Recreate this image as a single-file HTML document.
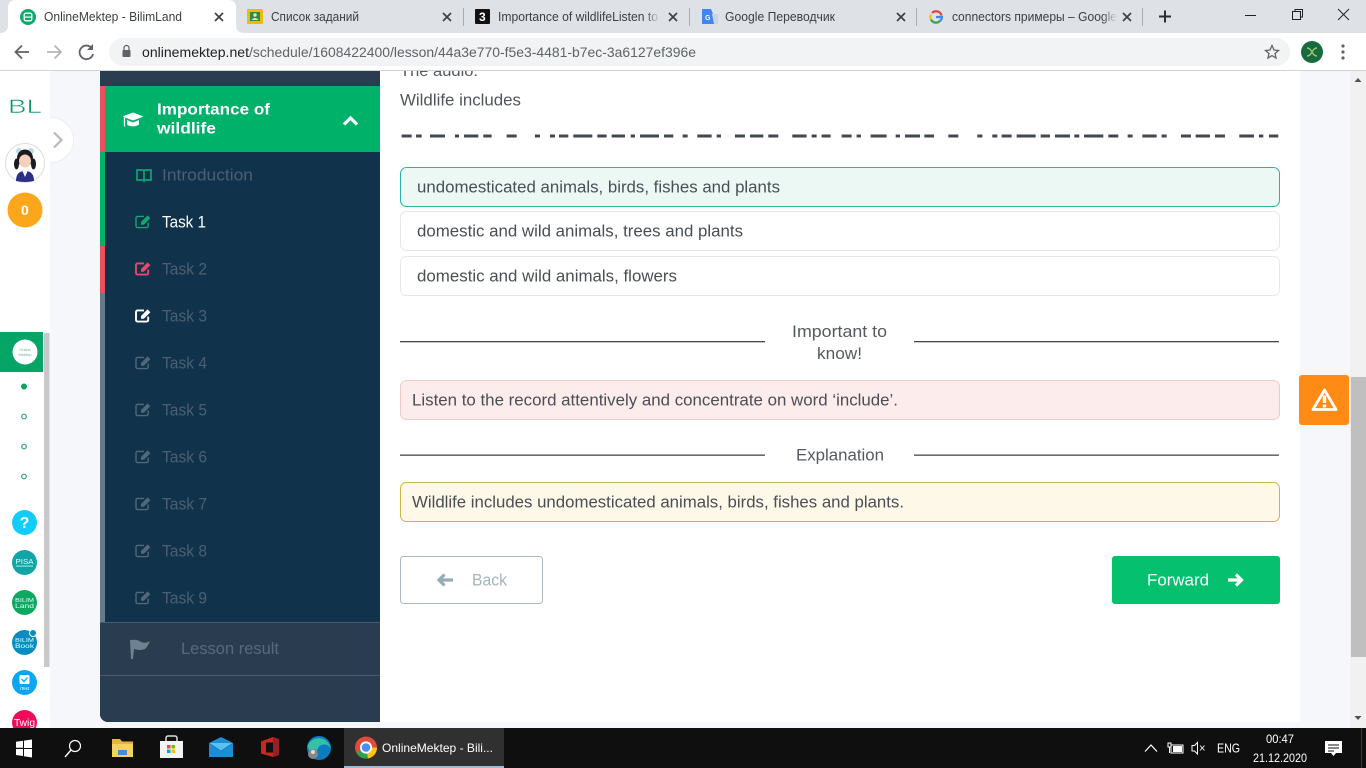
<!DOCTYPE html>
<html lang="en"><head><meta charset="utf-8"><title>OnlineMektep - BilimLand</title>
<style>
html,body{margin:0;padding:0;width:1366px;height:768px;overflow:hidden;background:#fff}
svg{display:block;position:absolute;left:0;top:0}
text{font-family:"Liberation Sans","Noto Sans CJK SC",sans-serif}
</style></head><body>
<svg width="1366" height="768" viewBox="0 0 1366 768" xmlns="http://www.w3.org/2000/svg">
<defs>
<symbol id="edit" viewBox="0 0 17 15" overflow="visible">
<path d="M9 2.4H2.6A1.6 1.6 0 0 0 1 4v8a1.6 1.6 0 0 0 1.6 1.6h9A1.6 1.6 0 0 0 13.2 12V8.6" fill="none" stroke="currentColor" stroke-width="1.4"/>
<path d="M6 8 12.6 1.4 15.4 4.2 8.8 10.8H6z" fill="currentColor"/>
</symbol>
<symbol id="editb" viewBox="0 0 17 15" overflow="visible">
<path d="M9 2.4H2.6A1.6 1.6 0 0 0 1 4v8a1.6 1.6 0 0 0 1.6 1.6h9A1.6 1.6 0 0 0 13.2 12V8.6" fill="none" stroke="currentColor" stroke-width="1.9"/>
<path d="M6 8 12.6 1.4 15.4 4.2 8.8 10.8H6z" fill="currentColor"/>
</symbol>
<linearGradient id="f1" x1="0" x2="1"><stop offset="0" stop-color="#dee1e6" stop-opacity="0"/><stop offset="1" stop-color="#dee1e6"/></linearGradient>
</defs>

<!-- page background -->
<rect width="1366" height="768" fill="#f5f7fa"/>

<!-- rail base and toggle -->
<circle cx="51" cy="140" r="22.5" fill="#fff" stroke="#eceef1"/>
<rect x="0" y="71" width="50" height="660" fill="#fff"/>
<rect x="44" y="333" width="5.500" height="334" fill="#c8c8c8"/>
<path d="M54 132.500 61.500 140 54 147.500" fill="none" stroke="#b5babd" stroke-width="2.200"/>

<!-- content -->
<rect x="380" y="71" width="920" height="651" fill="#fff"/>
<text x="400" y="76" font-size="16" fill="#555a60" textLength="78" lengthAdjust="spacingAndGlyphs">The audio:</text>
<rect x="380" y="0" width="920" height="71" fill="#fff"/>
<text x="400" y="105.500" font-size="16.5" fill="#51565c" textLength="121" lengthAdjust="spacingAndGlyphs">Wildlife includes</text>

<!-- dashes -->
<g fill="#43484e">
<g transform="translate(390 134.5) scale(.3333 1)">
<rect x="35" width="30" height="3"/><rect x="78" width="17" height="3"/><rect x="120" width="45" height="3"/><rect x="195" width="12" height="3"/><rect x="222" width="43" height="3"/><rect x="280" width="25" height="3"/><rect x="350" width="30" height="3"/><rect x="435" width="15" height="3"/><rect x="480" width="15" height="3"/><rect x="507" width="28" height="3"/><rect x="550" width="57" height="3"/><rect x="622" width="28" height="3"/><rect x="665" width="40" height="3"/><rect x="722" width="13" height="3"/><rect x="750" width="57" height="3"/><rect x="822" width="28" height="3"/><rect x="878" width="15" height="3"/><rect x="922" width="43" height="3"/><rect x="980" width="13" height="3"/><rect x="1035" width="30" height="3"/><rect x="1080" width="40" height="3"/><rect x="1135" width="30" height="3"/><rect x="1207" width="43" height="3"/><rect x="1265" width="15" height="3"/><rect x="1295" width="27" height="3"/><rect x="1355" width="30" height="3"/><rect x="1400" width="13" height="3"/><rect x="1442" width="48" height="3"/>
</g>
<g transform="translate(880 134.5) scale(.3333 1)">
<rect x="0" width="17" height="3"/><rect x="47" width="13" height="3"/><rect x="75" width="45" height="3"/><rect x="133" width="29" height="3"/><rect x="205" width="30" height="3"/><rect x="292" width="15" height="3"/><rect x="337" width="15" height="3"/><rect x="365" width="30" height="3"/><rect x="410" width="57" height="3"/><rect x="482" width="28" height="3"/><rect x="525" width="45" height="3"/><rect x="583" width="15" height="3"/><rect x="612" width="58" height="3"/><rect x="685" width="30" height="3"/><rect x="743" width="15" height="3"/><rect x="787" width="43" height="3"/><rect x="845" width="15" height="3"/><rect x="903" width="30" height="3"/><rect x="947" width="43" height="3"/><rect x="1005" width="30" height="3"/><rect x="1078" width="44" height="3"/><rect x="1137" width="13" height="3"/><rect x="1167" width="28" height="3"/>
</g>
</g>

<!-- options -->
<rect x="400.5" y="167.5" width="879" height="39" rx="6" fill="#ebf8f4" stroke="#2fb39c"/>
<text x="417" y="192.500" font-size="16.5" fill="#4a4f55" textLength="363" lengthAdjust="spacingAndGlyphs">undomesticated animals, birds, fishes and plants</text>
<rect x="400.5" y="211.5" width="879" height="39" rx="6" fill="#fff" stroke="#e5e7ea"/>
<text x="417" y="236.500" font-size="16.5" fill="#4a4f55" textLength="326" lengthAdjust="spacingAndGlyphs">domestic and wild animals, trees and plants</text>
<rect x="400.5" y="256.5" width="879" height="39" rx="6" fill="#fff" stroke="#e5e7ea"/>
<text x="417" y="281.500" font-size="16.5" fill="#4a4f55" textLength="260" lengthAdjust="spacingAndGlyphs">domestic and wild animals, flowers</text>

<rect x="400" y="341" width="365" height="1.3" fill="#44484d"/>
<rect x="914" y="341" width="365" height="1.3" fill="#44484d"/>
<text x="792" y="337" font-size="16.5" fill="#555a60" textLength="95" lengthAdjust="spacingAndGlyphs">Important to</text>
<text x="817" y="359" font-size="16.5" fill="#555a60" textLength="45" lengthAdjust="spacingAndGlyphs">know!</text>

<rect x="400.5" y="380.5" width="879" height="39" rx="6" fill="#fcecec" stroke="#eccaca"/>
<text x="412" y="405.500" font-size="16.5" fill="#4a4f55" textLength="486" lengthAdjust="spacingAndGlyphs">Listen to the record attentively and concentrate on word ‘include’.</text>

<rect x="400" y="454.5" width="365" height="1.3" fill="#44484d"/>
<rect x="914" y="454.5" width="365" height="1.3" fill="#44484d"/>
<text x="796" y="460.500" font-size="16.5" fill="#555a60" textLength="88" lengthAdjust="spacingAndGlyphs">Explanation</text>

<rect x="400.5" y="482.5" width="879" height="39" rx="6" fill="#fdf8e7" stroke="#cdb54e"/>
<text x="412" y="507.500" font-size="16.5" fill="#4a4f55" textLength="492" lengthAdjust="spacingAndGlyphs">Wildlife includes undomesticated animals, birds, fishes and plants.</text>

<!-- buttons -->
<rect x="400.5" y="556.5" width="142" height="47" rx="3" fill="#fff" stroke="#a9b9c0"/>
<path d="M444.500 574.500 439 580 444.500 585.500M440 580H453" fill="none" stroke="#93adb8" stroke-width="3.200"/>
<text x="472" y="585.500" font-size="17" fill="#a4b5bd" textLength="35" lengthAdjust="spacingAndGlyphs">Back</text>
<rect x="1112" y="556" width="168" height="48" rx="3" fill="#05c16f"/>
<text x="1147" y="585.500" font-size="17" fill="#fff" textLength="62" lengthAdjust="spacingAndGlyphs">Forward</text>
<path d="M1236 574.500 1241.500 580 1236 585.500M1240.500 580H1228" fill="none" stroke="#fff" stroke-width="3.200"/>

<!-- warning -->
<rect x="1299" y="375" width="50" height="50" rx="3" fill="#ff8a14"/>
<path d="M1324.500 390 1336 409.500H1313Z" fill="none" stroke="#fff" stroke-width="2.800" stroke-linejoin="round"/>
<rect x="1322.800" y="395.500" width="3.400" height="7.500" fill="#fff"/><rect x="1322.800" y="404.500" width="3.400" height="3" fill="#fff"/>

<!-- sidebar -->
<path d="M100 71H380V722H108A8 8 0 0 1 100 714Z" fill="#11324b"/>
<rect x="100" y="71" width="280" height="15" fill="#2a3d50"/>
<rect x="100" y="86" width="280" height="66" fill="#00b16a"/>
<rect x="100" y="86" width="5" height="66" fill="#e8505e"/>
<rect x="100" y="152" width="5" height="94" fill="#00b16a"/>
<rect x="100" y="246" width="5" height="47" fill="#e8505e"/>
<rect x="100" y="293" width="5" height="329" fill="#667a8a"/>
<path d="M100 622H380V722H108A8 8 0 0 1 100 714Z" fill="#2a3d50"/>
<rect x="100" y="622" width="280" height="1" fill="#4b5c6c"/>
<rect x="100" y="675" width="280" height="1" fill="#4b5c6c"/>

<!-- cap -->
<path d="M133 112.500 143.500 116.500 133 120.500 122.500 116.500Z" fill="#fff"/>
<path d="M127 120v4.500c3 2.500 9 2.500 12 0V120l-6 2.500z" fill="#fff"/>
<path d="M124.500 117.500v9" stroke="#fff" stroke-width="1.300"/>
<text x="157" y="114.500" font-size="16" font-weight="700" fill="#fff" textLength="113" lengthAdjust="spacingAndGlyphs">Importance of</text>
<text x="157" y="133.500" font-size="16" font-weight="700" fill="#fff" textLength="59" lengthAdjust="spacingAndGlyphs">wildlife</text>
<path d="M344 124.500 350.500 118 357 124.500" fill="none" stroke="#fff" stroke-width="3.200"/>

<!-- book -->
<path d="M137 170h5.500q1 0 1.500 1 .5-1 1.500-1h5.500v10h-5.500q-1 0-1.500 1-.5-1-1.500-1H137zM144 171v9" fill="none" stroke="#17a06f" stroke-width="1.700"/>
<text x="162" y="180.500" font-size="17" fill="#4a6072" textLength="91" lengthAdjust="spacingAndGlyphs">Introduction</text>

<use href="#edit" x="135" y="214" width="17" height="15" style="color:#17a46d"/>
<text x="162" y="227.500" font-size="17" fill="#fff" textLength="44" lengthAdjust="spacingAndGlyphs">Task 1</text>
<use href="#editb" x="135" y="261" width="17" height="15" style="color:#e8486a"/>
<text x="162" y="274.500" font-size="17" fill="#4a6072" textLength="45" lengthAdjust="spacingAndGlyphs">Task 2</text>
<use href="#editb" x="135" y="308" width="17" height="15" style="color:#fff"/>
<text x="162" y="321.500" font-size="17" fill="#4a6072" textLength="45" lengthAdjust="spacingAndGlyphs">Task 3</text>
<use href="#edit" x="135" y="355" width="17" height="15" style="color:#52677a"/>
<text x="162" y="368.500" font-size="17" fill="#4a6072" textLength="45" lengthAdjust="spacingAndGlyphs">Task 4</text>
<use href="#edit" x="135" y="402" width="17" height="15" style="color:#52677a"/>
<text x="162" y="415.500" font-size="17" fill="#4a6072" textLength="45" lengthAdjust="spacingAndGlyphs">Task 5</text>
<use href="#edit" x="135" y="449" width="17" height="15" style="color:#52677a"/>
<text x="162" y="462.500" font-size="17" fill="#4a6072" textLength="45" lengthAdjust="spacingAndGlyphs">Task 6</text>
<use href="#edit" x="135" y="496" width="17" height="15" style="color:#52677a"/>
<text x="162" y="509.500" font-size="17" fill="#4a6072" textLength="45" lengthAdjust="spacingAndGlyphs">Task 7</text>
<use href="#edit" x="135" y="543" width="17" height="15" style="color:#52677a"/>
<text x="162" y="556.500" font-size="17" fill="#4a6072" textLength="45" lengthAdjust="spacingAndGlyphs">Task 8</text>
<use href="#edit" x="135" y="590" width="17" height="15" style="color:#52677a"/>
<text x="162" y="603.500" font-size="17" fill="#4a6072" textLength="45" lengthAdjust="spacingAndGlyphs">Task 9</text>

<path d="M130 640q8-1 11 2 4 2 9-1-2 5-5 8-5 2-11 0l-1 10h-2z" fill="#6f808e"/>
<text x="181" y="654" font-size="17" fill="#586a7a" textLength="98" lengthAdjust="spacingAndGlyphs">Lesson result</text>

<!-- rail -->
<text x="8" y="113" font-size="19" fill="#0b9a6c" stroke="#fff" stroke-width=".5" textLength="34" lengthAdjust="spacingAndGlyphs">BL</text>
<circle cx="25" cy="163" r="19.500" fill="#fff" stroke="#dcdcdc"/>
<circle cx="19" cy="151" r="3" fill="#bcd9ea"/><circle cx="31" cy="151" r="3" fill="#bcd9ea"/>
<ellipse cx="25" cy="158" rx="8" ry="8.500" fill="#1b1b1f"/>
<ellipse cx="16.500" cy="164" rx="2.500" ry="5.500" fill="#1b1b1f"/><ellipse cx="33.500" cy="164" rx="2.500" ry="5.500" fill="#1b1b1f"/>
<ellipse cx="25" cy="161" rx="6" ry="6.500" fill="#f6d0bb"/>
<path d="M16 181q0-10 9-10t9 10q-9 2-18 0z" fill="#2b2f85"/>
<path d="M22 170h6l-3 7z" fill="#fff"/>
<circle cx="25" cy="210" r="17.500" fill="#fca61c"/>
<text x="21" y="215" font-size="14" font-weight="700" fill="#fff">0</text>

<rect x="0" y="332" width="43" height="40" fill="#04a566"/>
<circle cx="25" cy="352" r="12.500" fill="#fff"/>
<text x="25" y="351" font-size="4" fill="#6fb39c" text-anchor="middle">Online</text>
<text x="25" y="356" font-size="4" fill="#6fb39c" text-anchor="middle">Mektep</text>
<circle cx="24" cy="386.500" r="3" fill="#04a566"/>
<circle cx="24" cy="416.500" r="2.300" fill="none" stroke="#2aa57c" stroke-width="1.200"/>
<circle cx="24" cy="446.500" r="2.300" fill="none" stroke="#2aa57c" stroke-width="1.200"/>
<circle cx="24" cy="476.500" r="2.300" fill="none" stroke="#2aa57c" stroke-width="1.200"/>

<circle cx="24.500" cy="522.500" r="12.500" fill="#12cdfc"/>
<text x="24.500" y="528" font-size="16" font-weight="700" fill="#fff" text-anchor="middle">?</text>
<circle cx="24.500" cy="562.500" r="12.500" fill="#11a5a6"/>
<text x="24.500" y="564" font-size="7" fill="#dff" text-anchor="middle" textLength="18" lengthAdjust="spacingAndGlyphs">PISA</text>
<rect x="16" y="565.500" width="17" height="1.200" fill="#bfe" opacity=".7"/>
<circle cx="24.500" cy="602.500" r="12.500" fill="#0fa861"/>
<text x="24.500" y="602" font-size="5.500" fill="#dff" text-anchor="middle" textLength="19" lengthAdjust="spacingAndGlyphs">BILIM</text>
<text x="24.500" y="608" font-size="6" fill="#dff" text-anchor="middle" textLength="19" lengthAdjust="spacingAndGlyphs">Land</text>
<circle cx="24.500" cy="642.500" r="12.500" fill="#0a8cc0"/>
<text x="24.500" y="642" font-size="5.500" fill="#dff" text-anchor="middle" textLength="19" lengthAdjust="spacingAndGlyphs">BILIM</text>
<text x="24.500" y="648" font-size="6" fill="#dff" text-anchor="middle" textLength="19" lengthAdjust="spacingAndGlyphs">Book</text>
<circle cx="33" cy="633" r="3.500" fill="#0a8cc0" stroke="#fff"/>
<circle cx="24.500" cy="682.500" r="12.500" fill="#0aa6f0"/>
<rect x="19.500" y="675" width="10" height="9" rx="1" fill="#fff"/>
<path d="M21.500 679l2.500 2.500 3.500-4" fill="none" stroke="#0aa6f0" stroke-width="1.300"/>
<text x="24.500" y="690" font-size="4.500" fill="#fff" text-anchor="middle">iTest</text>
<circle cx="24.500" cy="722.500" r="12.500" fill="#ee0c5a"/>
<text x="24.500" y="726" font-size="10" fill="#fff" text-anchor="middle" textLength="21" lengthAdjust="spacingAndGlyphs">Twig</text>

<!-- scrollbar -->
<rect x="1350" y="71" width="16" height="657" fill="#f1f1f1"/>
<rect x="1351" y="377" width="15" height="280" fill="#bfbfbf"/>
<path d="M1354.500 82 1358 78 1361.500 82Z" fill="#505050"/>
<path d="M1354.500 716 1358 720 1361.500 716Z" fill="#505050"/>

<!-- chrome -->
<rect x="0" y="0" width="1366" height="33" fill="#dee1e6"/>
<rect x="0" y="33" width="1366" height="37" fill="#fff"/>
<rect x="0" y="70" width="1366" height="1" fill="#d0d2d5"/>
<path d="M0 33Q8 33 8 25V8Q8 0 16 0H228Q236 0 236 8V25Q236 33 244 33Z" fill="#fff"/>
<circle cx="28" cy="17" r="8" fill="#0faa6e"/>
<rect x="24.200" y="13.200" width="7.600" height="7.600" rx="1.800" fill="none" stroke="#fff" stroke-width="1.300"/><rect x="24.500" y="16.500" width="7" height="1.200" fill="#fff"/>
<text x="44" y="21" font-size="12.500" fill="#3c4043" textLength="138" lengthAdjust="spacingAndGlyphs">OnlineMektep - BilimLand</text>

<rect x="247" y="9" width="16" height="15" rx="1" fill="#f5b800"/>
<rect x="250" y="12" width="10" height="9" fill="#2a8b4a"/>
<circle cx="255" cy="15" r="1.700" fill="#fde293"/><path d="M251.500 20q3.500-4 7 0z" fill="#fde293"/>
<text x="271" y="21" font-size="12.500" fill="#3c4043" textLength="88" lengthAdjust="spacingAndGlyphs">Список заданий</text>

<rect x="475" y="9" width="15" height="15" rx="1" fill="#111"/>
<text x="479" y="21" font-size="12" font-weight="700" fill="#fff">3</text>
<text x="498" y="21" font-size="12.500" fill="#3c4043" textLength="160" lengthAdjust="spacingAndGlyphs">Importance of wildlifeListen to</text>
<rect x="645" y="8" width="15" height="20" fill="url(#f1)"/><rect x="659.500" y="8" width="10" height="20" fill="#dee1e6"/>

<path d="M702 9h9l6 15h-15z" fill="#4285f4"/><path d="M712 14h6v10h-4z" fill="#c8d4e8"/>
<text x="705" y="20" font-size="7" font-weight="700" fill="#fff">G</text>
<text x="725" y="21" font-size="12.500" fill="#3c4043" textLength="110" lengthAdjust="spacingAndGlyphs">Google Переводчик</text>

<circle cx="936" cy="17" r="5.600" fill="none" stroke="#4285f4" stroke-width="2.200" stroke-dasharray="9 27" stroke-dashoffset="-5"/>
<path d="M941.500 15.500A5.600 5.600 0 0 0 932 13" fill="none" stroke="#ea4335" stroke-width="2.200"/>
<path d="M931 14.500A5.600 5.600 0 0 0 931 19.500" fill="none" stroke="#fbbc05" stroke-width="2.200"/>
<path d="M931 19.500A5.600 5.600 0 0 0 940 21" fill="none" stroke="#34a853" stroke-width="2.200"/>
<path d="M936 17H942A5.600 5.600 0 0 1 940 21" fill="none" stroke="#4285f4" stroke-width="2.200"/>
<text x="952" y="21" font-size="12.500" fill="#3c4043" textLength="165" lengthAdjust="spacingAndGlyphs">connectors примеры – Google</text>
<rect x="1102" y="8" width="15" height="20" fill="url(#f1)"/><rect x="1116.500" y="8" width="20" height="20" fill="#dee1e6"/>

<g stroke="#3c4043" stroke-width="1.700" fill="none">
<path d="M215 13 223 21M223 13 215 21"/>
<path d="M443 13 451 21M451 13 443 21"/>
<path d="M669 13 677 21M677 13 669 21"/>
<path d="M897 13 905 21M905 13 897 21"/>
<path d="M1123 13 1131 21M1131 13 1123 21"/>
</g>
<g fill="#a9acb0"><rect x="463" y="8" width="1" height="18"/><rect x="689" y="8" width="1" height="18"/><rect x="916" y="8" width="1" height="18"/><rect x="1142" y="8" width="1" height="18"/></g>
<path d="M1165 10.500V22.500M1159 16.500H1171" stroke="#2b2e32" stroke-width="2" fill="none"/>
<g stroke="#222" stroke-width="1" fill="none">
<path d="M1245 15.500H1256"/>
<rect x="1292.500" y="11.500" width="8" height="8"/><path d="M1295 11.500V9.500H1302.500V17H1300.500"/>
<path d="M1338 9 1349 20M1349 9 1338 20"/>
</g>

<!-- toolbar -->
<rect x="109" y="38" width="1181" height="28" rx="14" fill="#f1f3f4"/>
<path d="M29 52H16M22 45.500 15.500 52 22 58.500" fill="none" stroke="#5f6368" stroke-width="1.800"/>
<path d="M47 52H60.500M54.500 45.500 61 52 54.500 58.500" fill="none" stroke="#b4b6b9" stroke-width="1.800"/>
<path d="M92 48.500A6.800 6.800 0 1 0 93 54" fill="none" stroke="#5f6368" stroke-width="1.800"/>
<path d="M93 44v6h-6z" fill="#5f6368"/>
<rect x="122.500" y="50" width="8" height="7" rx="1" fill="#5f6368"/>
<path d="M124 50v-2a2.500 2.500 0 0 1 5 0v2" fill="none" stroke="#5f6368" stroke-width="1.200"/>
<text x="142" y="57" font-size="13.500" fill="#202124" textLength="107" lengthAdjust="spacingAndGlyphs">onlinemektep.net</text>
<text x="249" y="57" font-size="13.500" fill="#5f6368" textLength="447" lengthAdjust="spacingAndGlyphs">/schedule/1608422400/lesson/44a3e770-f5e3-4481-b7ec-3a6127ef396e</text>
<path d="M1272 45.500 1274 50 1278.500 50.500 1275 53.500 1276 58 1272 55.600 1268 58 1269 53.500 1265.500 50.500 1270 50Z" fill="none" stroke="#5f6368" stroke-width="1.300"/>
<circle cx="1312" cy="52" r="11" fill="#176b3e"/>
<path d="M1307 48q3 0 5 4t5 4M1317 48q-3 0-5 4t-5 4" fill="none" stroke="#9cbf6c" stroke-width="1.400"/>
<circle cx="1343" cy="46" r="1.600" fill="#5f6368"/><circle cx="1343" cy="52" r="1.600" fill="#5f6368"/><circle cx="1343" cy="58" r="1.600" fill="#5f6368"/>

<!-- taskbar -->
<rect x="0" y="728" width="1366" height="40" fill="#0f0f0f"/>
<rect x="344" y="728" width="160" height="40" fill="#303030"/>
<rect x="344" y="766" width="160" height="2" fill="#9dbbd6"/>
<g fill="#fff"><path d="M16 741.800l7-1v7h-7zM24 740.600l8-1.100v8.500h-8zM16 749h7v7l-7-1zM24 749h8v8.500l-8-1.300z"/></g>
<circle cx="75" cy="746" r="5.500" fill="none" stroke="#fff" stroke-width="1.200"/>
<path d="M71 750 65 757" stroke="#fff" stroke-width="1.400"/>
<path d="M112 739h8l2 2.500h11V757h-21z" fill="#e7b53c"/>
<rect x="112" y="744" width="21" height="13" fill="#f6d263"/>
<rect x="118" y="750" width="9" height="5" fill="#3c8fd6"/>
<rect x="160" y="741" width="23" height="17" fill="#f4f4f4"/>
<path d="M166 741v-2.500q0-2.500 2-2.500h7q2 0 2 2.500v2.500" fill="none" stroke="#ddd" stroke-width="1.500"/>
<rect x="167" y="745" width="3.500" height="3.500" fill="#f25022"/><rect x="171.500" y="745" width="3.500" height="3.500" fill="#7fba00"/><rect x="167" y="749.500" width="3.500" height="3.500" fill="#00a4ef"/><rect x="171.500" y="749.500" width="3.500" height="3.500" fill="#ffb900"/>
<path d="M209 743 221 737 233 743V757H209Z" fill="#1b8ed6"/>
<path d="M209 743 221 751 233 743" fill="#5cc0f0" stroke="#0f6fb2" stroke-width=".6"/>
<path d="M261 741.500 273 737 279 739V755L273 757 261 753.500Z" fill="#c8281f"/>
<path d="M273 737 279 739V755L273 757Z" fill="#96202a"/>
<rect x="266" y="742.500" width="7" height="10" fill="#0f0f0f"/>
<circle cx="319" cy="748" r="12" fill="#0c7cc0"/>
<path d="M307.500 746a12 12 0 0 1 23 2q-4-5-9-3t-5 10q-7-2-9-9z" fill="#35c1a8"/>
<circle cx="313" cy="754" r="5" fill="#888"/><circle cx="313" cy="752" r="2" fill="#ddd"/>
<circle cx="366" cy="747.500" r="11" fill="#de4c3c"/>
<path d="M366 747.500 356.500 753A11 11 0 0 0 368 758.500Z" fill="#2ea24c"/>
<path d="M366 747.500 377 747.500A11 11 0 0 1 368 758.500Z" fill="#fbc219"/>
<circle cx="366" cy="747.500" r="5.200" fill="#4c8df0" stroke="#fff" stroke-width="1.800"/>
<text x="382" y="752" font-size="12" fill="#fff" textLength="111" lengthAdjust="spacingAndGlyphs">OnlineMektep - Bili...</text>

<path d="M1145 751.500 1151 745 1157 751.500" fill="none" stroke="#fff" stroke-width="1.200"/>
<rect x="1171" y="745" width="12" height="8" fill="none" stroke="#fff"/><rect x="1173" y="746" width="9" height="6" fill="#fff"/>
<path d="M1168 743v4h3v-4zM1169.500 747v6" fill="none" stroke="#fff" stroke-width="1"/>
<path d="M1192 745.500h2.500l3-3v11.500l-3-3H1192z" fill="none" stroke="#fff"/>
<path d="M1200 745.500 1204.500 750.500M1204.500 745.500 1200 750.500" stroke="#fff" stroke-width=".9"/>
<text x="1217" y="752.500" font-size="13" fill="#fff" textLength="23" lengthAdjust="spacingAndGlyphs">ENG</text>
<text x="1266" y="743" font-size="12" fill="#fff" textLength="28" lengthAdjust="spacingAndGlyphs">00:47</text>
<text x="1253" y="762" font-size="12" fill="#fff" textLength="54" lengthAdjust="spacingAndGlyphs">21.12.2020</text>
<path d="M1325 741H1342V753H1336L1333.500 756 1331 753H1325Z" fill="#fff"/>
<path d="M1328 745h11M1328 748h11M1328 751h6" stroke="#0f0f0f" stroke-width="1"/>
<rect x="1361" y="728" width="1" height="40" fill="#3a3a3a"/>
</svg>
</body></html>
